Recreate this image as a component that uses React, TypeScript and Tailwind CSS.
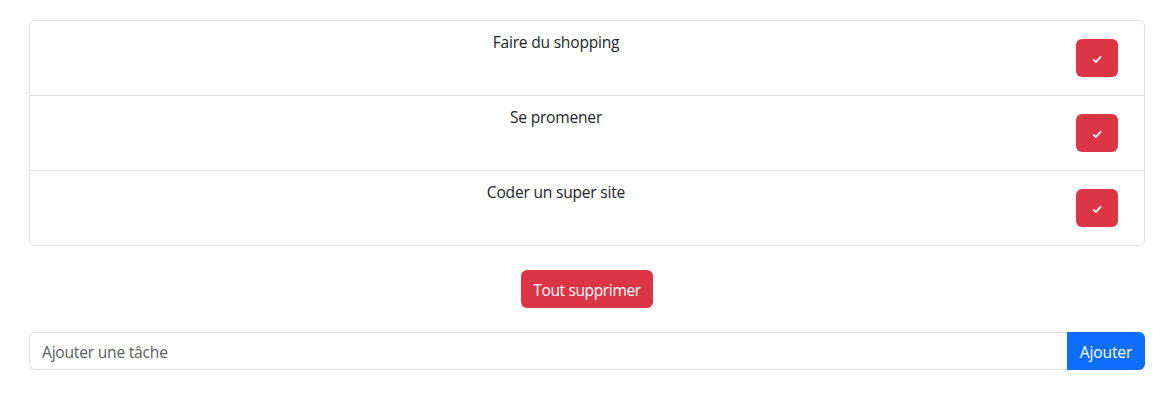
import { useState } from "react";

const initialTasks = ["Faire du shopping", "Se promener", "Coder un super site"];

function CheckIcon() {
  return (
    <svg width="10" height="8" viewBox="0 0 10 8" fill="none" aria-hidden="true">
      <path d="M1.2 4.4 3.9 7 9 1.4" stroke="#fff" strokeWidth="1.8" />
    </svg>
  );
}

export default function App() {
  const [tasks, setTasks] = useState(initialTasks);
  const [draft, setDraft] = useState("");

  const addTask = () => {
    if (draft.trim()) {
      setTasks([...tasks, draft.trim()]);
      setDraft("");
    }
  };

  return (
    <main className="flex min-h-screen flex-col items-center bg-white px-[29px] pt-5 font-['Open_Sans',sans-serif] text-[15.6px] leading-6 tracking-[-0.22px] text-[#212529]">
      <ul className="w-full divide-y divide-[#dee2e6] rounded-md border border-[#dee2e6]">
        {tasks.map((task, index) => (
          <li key={index} className="flex h-[75px] items-start pr-[26px] pl-4 last:h-[74px]">
            <span className="grow pt-[9px] pr-2.5 text-center">{task}</span>
            <button
              className="mt-[18px] flex h-[38px] w-[42px] items-center justify-center rounded-md bg-[#dc3545] pt-px"
              aria-label="Terminer"
              onClick={() => setTasks(tasks.filter((_, i) => i !== index))}
            >
              <CheckIcon />
            </button>
          </li>
        ))}
      </ul>
      <button
        className="my-6 flex h-[38px] w-[132px] items-center justify-center rounded-md bg-[#dc3545] pt-0.5 tracking-[-0.4px] whitespace-nowrap text-white"
        onClick={() => setTasks([])}
      >
        Tout supprimer
      </button>
      <div className="flex h-[38px] w-full">
        <input
          className="min-w-0 grow rounded-l-md border border-r-0 border-[#dee2e6] px-3 pt-0.5 tracking-[-0.22px] outline-none placeholder:text-[#595c5f]"
          placeholder="Ajouter une tâche"
          value={draft}
          onChange={(event) => setDraft(event.target.value)}
        />
        <button
          className="flex w-[78px] items-center justify-center rounded-r-md bg-[#0d6efd] pt-0.5 tracking-[-0.15px] text-white"
          onClick={addTask}
        >
          Ajouter
        </button>
      </div>
    </main>
  );
}
